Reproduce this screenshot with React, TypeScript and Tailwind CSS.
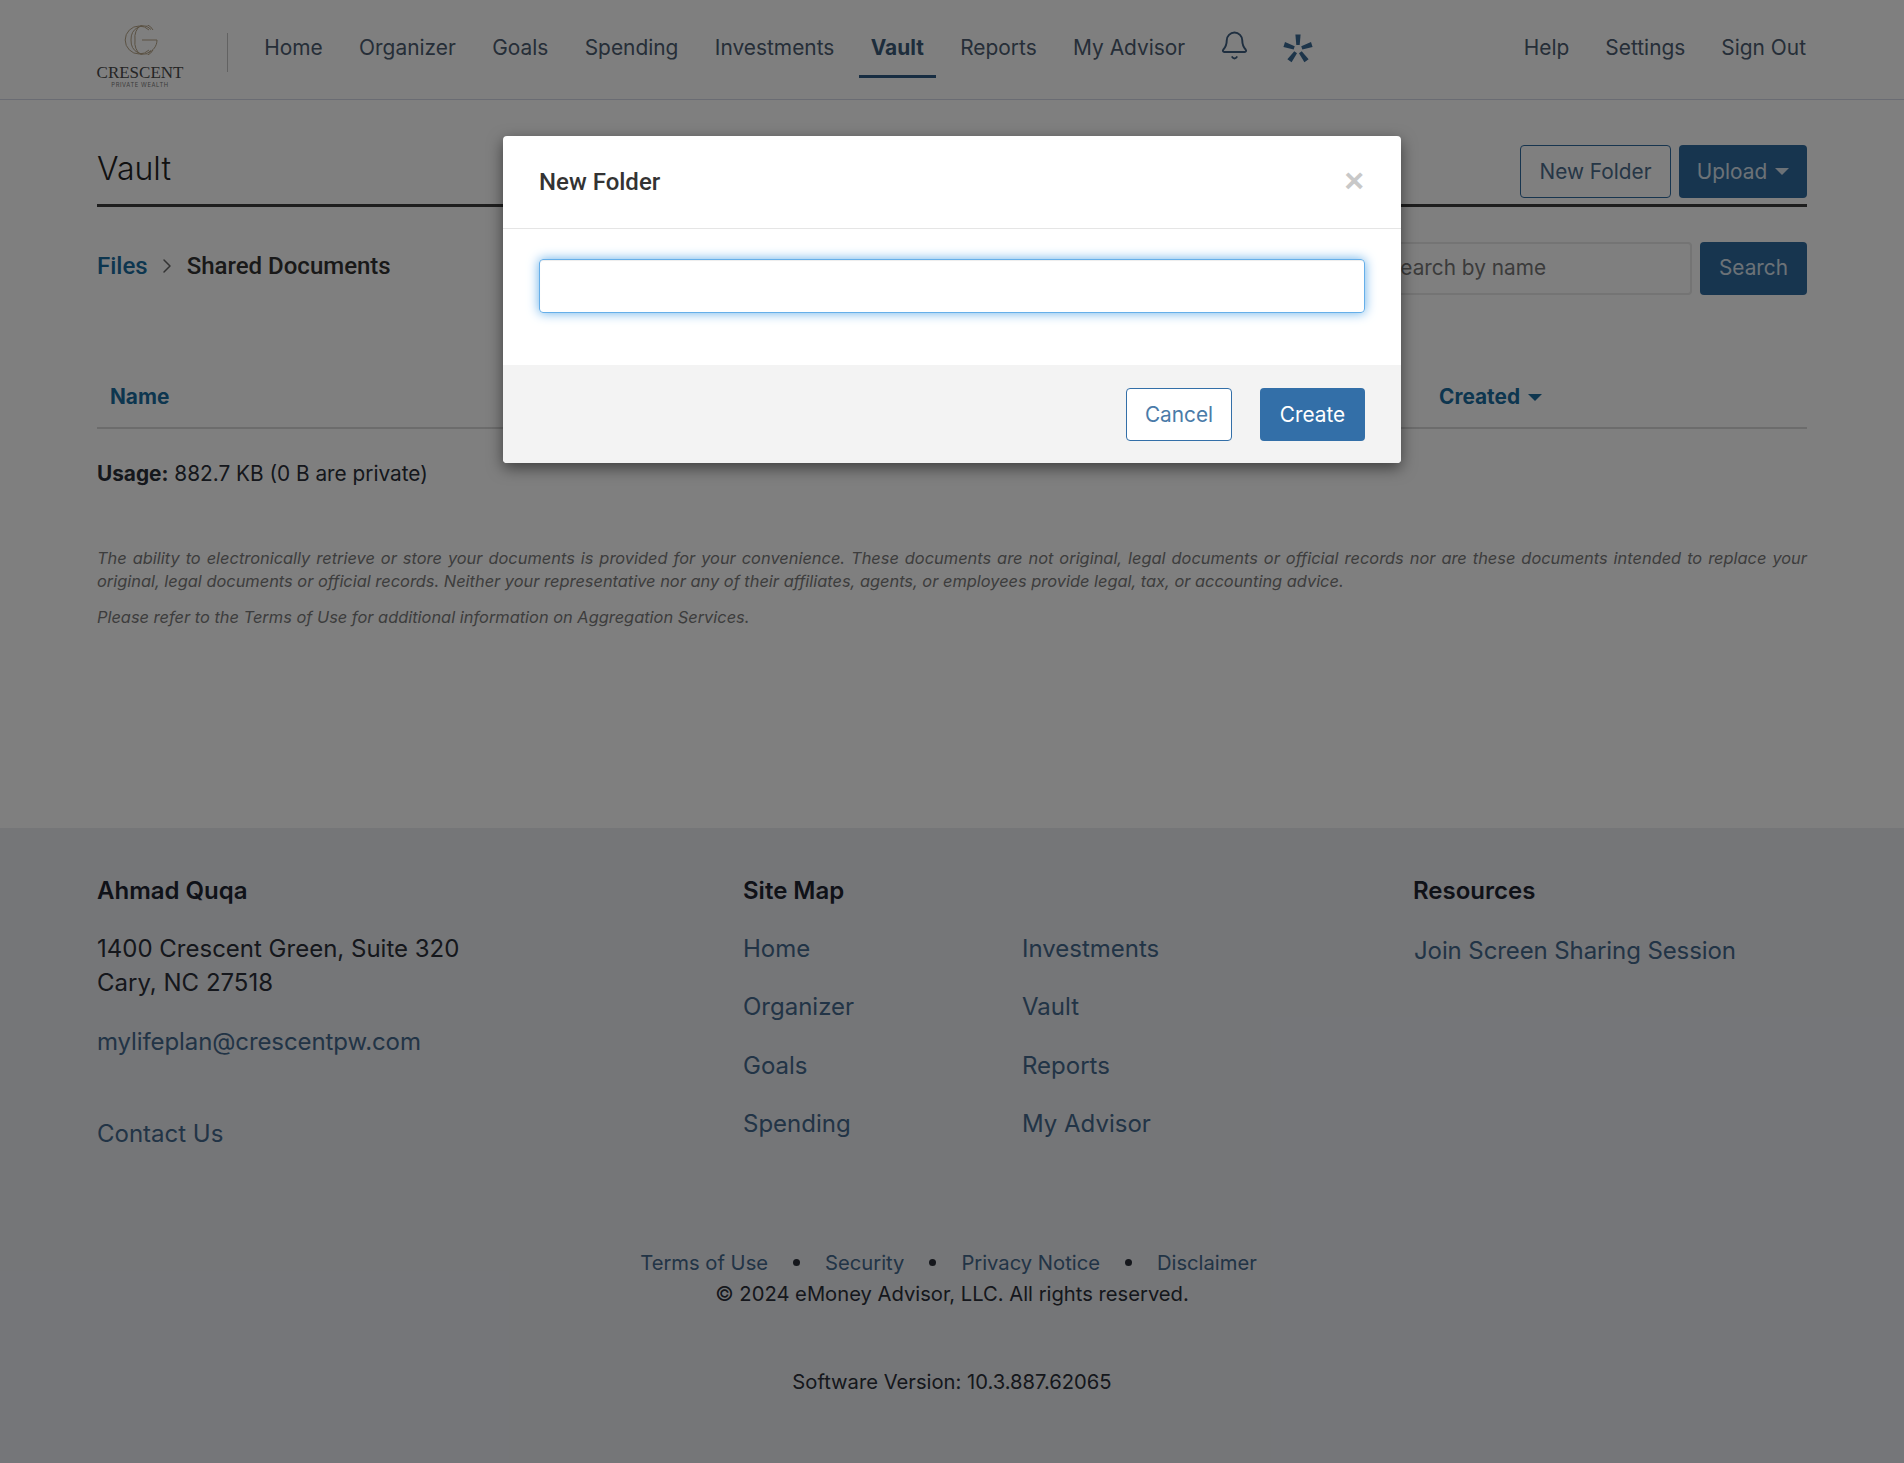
import {Bell, ChevronRight} from "lucide-react";

const navLinks = ["Home", "Organizer", "Goals", "Spending", "Investments", "Vault", "Reports", "My Advisor"]
const siteMapLeft = ["Home", "Organizer", "Goals", "Spending"]
const siteMapRight = ["Investments", "Vault", "Reports", "My Advisor"]

function Logo() {
    return (
        <div className="flex flex-col items-center w-[86px] mt-[25px]">
            <svg width="36" height="30" viewBox="0 0 36 30" fill="none" stroke="#b5a386" strokeWidth="1">
                <path d="M27 5A14 14 0 1 0 27 25" />
                <path d="M29 4.5A12 13.5 0 0 0 9 15A12 13.5 0 0 0 29 25.5" />
                <path d="M31 5A10 13 0 0 0 13 15A10 13 0 0 0 31 25" />
                <path d="M20 15H35C35 21 31 26 26 28" />
            </svg>
            <span className="font-['Liberation_Serif'] text-[17px] leading-[17px] text-[#4a4a4a] mt-[9px] whitespace-nowrap">CRESCENT</span>
            <span className="text-[5.8px] leading-[7px] tracking-[0.6px] text-[#777] whitespace-nowrap">PRIVATE WEALTH</span>
        </div>
    )
}

function Star() {
    const petal = "M12.4 0.5h5.2l-0.9 10.5h-3.4z"
    return (
        <svg width="30" height="30" viewBox="0 0 30 30" fill="#3a6a95">
            <path d={petal} />
            <path d={petal} transform="rotate(72 15 15)" />
            <path d={petal} transform="rotate(144 15 15)" />
            <path d={petal} transform="rotate(216 15 15)" />
            <path d={petal} transform="rotate(288 15 15)" />
        </svg>
    )
}

function Caret() {
    return <span className="inline-block w-0 h-0 border-x-[7px] border-x-transparent border-t-[7px] border-t-current"></span>
}

function App() {
    return (
        <div className="relative min-h-[1463px] flex flex-col bg-white text-[#2a2f38] font-['Inter',sans-serif] text-[20.8px] overflow-hidden">
            <header className="h-[100px] border-b border-[#d5d9e6] px-[97px] flex items-start text-[20.9px]">
                <Logo />
                <div className="w-px h-[39px] bg-[#c4c4c4] ml-[44px] mr-[18px] mt-[33px]"></div>
                <nav className="flex items-start">
                    {navLinks.map((l) => (
                        <a key={l} className={l === "Vault" ? "flex items-center h-[62px] mt-[16px] pt-[5px] mx-[6.2px] px-[12px] font-bold text-[#3a5a78] border-b-[3px] border-[#2f5a85]" : "flex items-center h-[62px] mt-[16px] pt-[5px] px-[18.2px] text-[#4c5c70] border-b-[3px] border-transparent"}>{l}</a>
                    ))}
                    <Bell size={31} strokeWidth={1.5} className="text-[#3e5e80] ml-[16px] mt-[30px]" />
                    <div className="ml-[33px] mt-[34px]"><Star /></div>
                </nav>
                <div className="ml-auto mr-[1px] mt-[33px] flex items-center gap-[36px] leading-[30px] text-[#4c5c70]">
                    <a>Help</a>
                    <a>Settings</a>
                    <a>Sign Out</a>
                </div>
            </header>

            <main className="h-[728px] px-[97px] flex flex-col">
                <div className="flex items-end justify-between border-b-[3px] border-[#3c3c3c] h-[107px] pb-[6px]">
                    <h1 className="text-[32px] leading-[40px] font-light text-[#222] mb-[9px]">Vault</h1>
                    <div className="flex gap-[8px]">
                        <button className="w-[151px] h-[53px] rounded-[4px] border border-[#2f6a9e] text-[#4c6c8c]">New Folder</button>
                        <button className="w-[128px] h-[53px] rounded-[4px] bg-[#2f6a9e] text-[#d9e4ef] flex items-center justify-center gap-[8px]">Upload <Caret /></button>
                    </div>
                </div>
                <div className="flex items-center justify-between mt-[35px] h-[53px]">
                    <div className="flex items-center font-['Roboto',sans-serif] font-medium text-[24px] text-[#333] mb-[5px]">
                        <a className="text-[#1a6c9f]">Files</a>
                        <ChevronRight size={24} strokeWidth={1.5} className="ml-[7px] mr-[8px] text-[#666]" />
                        <span>Shared Documents</span>
                    </div>
                    <div className="flex gap-[8px]">
                        <input readOnly placeholder="Search by name" className="w-[321px] h-[53px] rounded-[4px] border-2 border-[#e8e8e8] px-[14px] pb-[2px] text-[20.8px] placeholder:text-[#777]" />
                        <button className="w-[107px] h-[53px] rounded-[4px] bg-[#2f6a9e] text-[#d9e4ef] pb-[2px]">Search</button>
                    </div>
                </div>
                <div className="flex justify-between items-center h-[66px] mt-[68px] pt-[4px] border-b-2 border-[#d8d8d8] pl-[13px]">
                    <a className="font-bold text-[#1a6c9f]">Name</a>
                    <a className="font-bold text-[#1a6c9f] flex items-center gap-[8px] mr-[265px]">Created <Caret /></a>
                </div>
                <p className="mt-[30px] leading-[30px]"><b className="font-bold">Usage:</b> 882.7 KB (0 B are private)</p>
                <p className="mt-[58px] text-[16.4px] leading-[23px] italic text-justify text-[#7a7a7a]">The ability to electronically retrieve or store your documents is provided for your convenience. These documents are not original, legal documents or official records nor are these documents intended to replace your original, legal documents or official records. Neither your representative nor any of their affiliates, agents, or employees provide legal, tax, or accounting advice.</p>
                <p className="mt-[13px] text-[16.4px] leading-[23px] italic text-[#7a7a7a]">Please refer to the Terms of Use for additional information on Aggregation Services.</p>
            </main>

            <footer className="flex-1 bg-[#eaecf1] px-[97px] pt-[45px]">
                <div className="flex items-start h-[374px] text-[24px] leading-[34px]">
                    <div className="w-[646px]">
                        <h4 className="font-semibold text-[#1f2430] leading-[36px]">Ahmad Quqa</h4>
                        <p className="mt-[23px]">1400 Crescent Green, Suite 320<br />Cary, NC 27518</p>
                        <a className="block mt-[25px] text-[#44688c] tracking-[-0.1px]">mylifeplan@crescentpw.com</a>
                        <a className="block mt-[58px] text-[#44688c]">Contact Us</a>
                    </div>
                    <div className="w-[670px]">
                        <h4 className="font-semibold text-[#1f2430] leading-[36px]">Site Map</h4>
                        <div className="flex mt-[23px] text-[#44688c]">
                            <div className="w-[279px] flex flex-col gap-[24.4px]">
                                {siteMapLeft.map((l) => <a key={l}>{l}</a>)}
                            </div>
                            <div className="flex flex-col gap-[24.4px]">
                                {siteMapRight.map((l) => <a key={l}>{l}</a>)}
                            </div>
                        </div>
                    </div>
                    <div>
                        <h4 className="font-semibold text-[#1f2430] leading-[36px]">Resources</h4>
                        <a className="block mt-[25px] ml-[1px] text-[#44688c] tracking-[-0.1px]">Join Screen Sharing Session</a>
                    </div>
                </div>
                <div className="flex flex-col items-center text-[20.2px] leading-[31px]">
                    <div className="flex items-center gap-[25px] pr-[7px] text-[#44688c]">
                        <a>Terms of Use</a>
                        <span className="w-[7px] h-[7px] rounded-full bg-[#2a2f38]"></span>
                        <a>Security</a>
                        <span className="w-[7px] h-[7px] rounded-full bg-[#2a2f38]"></span>
                        <a>Privacy Notice</a>
                        <span className="w-[7px] h-[7px] rounded-full bg-[#2a2f38]"></span>
                        <a>Disclaimer</a>
                    </div>
                    <p>© 2024 eMoney Advisor, LLC. All rights reserved.</p>
                    <p className="mt-[57px]">Software Version: 10.3.887.62065</p>
                </div>
            </footer>

            {/* dimmed backdrop + dialog */}
            <div className="absolute inset-0 bg-black/50"></div>
            <div className="absolute top-[136px] left-[503px] w-[898px] rounded-[4px] bg-white shadow-[0_5px_15px_rgba(0,0,0,0.5)] overflow-hidden">
                <div className="h-[93px] border-b border-[#e5e5e5] flex items-center justify-between pl-[36px] pr-[37px]">
                    <h3 className="font-['Roboto',sans-serif] font-medium text-[24px] text-[#333]">New Folder</h3>
                    <span className="text-[#c8c8c8] font-bold text-[34px] leading-none font-['Liberation_Sans',sans-serif] mb-[4px]">×</span>
                </div>
                <div className="h-[136px] px-[36px] pt-[30px]">
                    <input readOnly className="w-full h-[54px] rounded-[4px] border border-[#66afe9] shadow-[inset_0_1px_1px_rgba(0,0,0,0.075),0_0_12px_#66afe9] outline-none" />
                </div>
                <div className="h-[98px] bg-[#f3f3f3] flex items-center justify-end gap-[28px] px-[36px]">
                    <button className="w-[106px] h-[53px] rounded-[4px] bg-white border border-[#336fa8] text-[#4a7ba8] pt-[1px]">Cancel</button>
                    <button className="w-[105px] h-[53px] rounded-[4px] bg-[#336fa8] text-white pt-[1px]">Create</button>
                </div>
            </div>
        </div>
    );
}

export default App;
